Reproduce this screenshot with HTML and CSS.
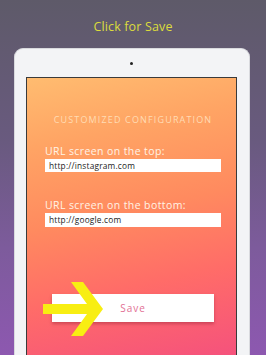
FILE: index.html
```html
<!DOCTYPE html>
<html>
<head>
<meta charset="utf-8">
<link rel="stylesheet" href="styles.css">
</head>
<body>
<div class="page">
  <h1 class="headline">Click for Save</h1>
  <div class="tablet">
    <div class="camera"></div>
    <div class="screen">
      <h2 class="title">CUSTOMIZED CONFIGURATION</h2>
      <label class="label">URL screen on the top:</label>
      <div class="input">http://instagram.com</div>
      <label class="label label-second">URL screen on the bottom:</label>
      <div class="input input-second">http://google.com</div>
      <div class="save-wrap">
        <button class="save">Save</button>
        <svg class="arrow" width="62" height="56" viewBox="40 283 62 56">
          <polygon points="42,306 86,306 70,284 82,284 102,311 82,338 70,338 86,316 42,316" fill="#f8ee12"/>
        </svg>
      </div>
    </div>
  </div>
</div>
</body>
</html>
```

FILE: styles.css
```css
* { box-sizing: border-box; }
html, body { margin: 0; padding: 0; }
body {
  width: 266px;
  height: 355px;
  overflow: hidden;
  font-family: "Open Sans", "Noto Sans", sans-serif;
  background: linear-gradient(180deg, #5e5a69 0%, #695a7f 40%, #7d5b9c 70%, #8d58b0 100%);
}
.page {
  display: flex;
  flex-direction: column;
  align-items: center;
  height: 355px;
}
.headline {
  margin: 18px 0 0 0;
  font-size: 12.5px;
  line-height: 18px;
  font-weight: 400;
  color: #dcdc3c;
  letter-spacing: 0.15px;
}
.tablet {
  align-self: flex-start;
  margin-top: 12px;
  margin-left: 14px;
  width: 236px;
  flex: 1;
  background: #f3f4f6;
  border-radius: 9px 9px 0 0;
  border: 1px solid #d9dade;
  border-bottom: none;
  padding: 0 12px 0 11px;
  display: flex;
  flex-direction: column;
  align-items: center;
}
.camera {
  width: 3px;
  height: 3px;
  border-radius: 50%;
  background: #222;
  margin: 13px 0 12px;
}
.screen {
  width: 100%;
  flex: 1;
  border: 1px solid #3a3a3a;
  border-bottom: none;
  background: linear-gradient(168deg, #ffbc70 0%, #ffa464 22%, #ff8a5f 48%, #ff6c68 72%, #f5527c 100%);
  padding: 36px 15px 0 18px;
  display: flex;
  flex-direction: column;
}
.title {
  margin: 0;
  text-align: center;
  font-size: 9px;
  line-height: 12px;
  font-weight: 400;
  letter-spacing: 1.15px;
  color: #ffdcb4;
}
.label {
  display: block;
  margin-top: 19px;
  font-size: 10.5px;
  line-height: 13px;
  letter-spacing: 0.4px;
  color: #fff3e6;
}
.label-second { margin-top: 27px; }
.input {
  margin-top: 1px;
  height: 13px;
  background: #fff;
  font-size: 8.3px;
  line-height: 13px;
  padding-left: 4px;
  letter-spacing: 0.2px;
  color: #222;
}
.input-second { height: 14px; line-height: 14px; }
.save-wrap {
  position: relative;
  margin-top: 67px;
  display: flex;
  justify-content: center;
}
.save {
  width: 162px;
  height: 28px;
  margin-left: 0;
  border: none;
  background: #fff;
  box-shadow: 0 2px 3px rgba(120, 20, 40, 0.35);
  font-family: "Open Sans", "Noto Sans", sans-serif;
  font-size: 10px;
  letter-spacing: 1px;
  color: #e26f94;
  padding: 0;
}
.arrow {
  position: absolute;
  left: -4px;
  top: -13px;
}
```
